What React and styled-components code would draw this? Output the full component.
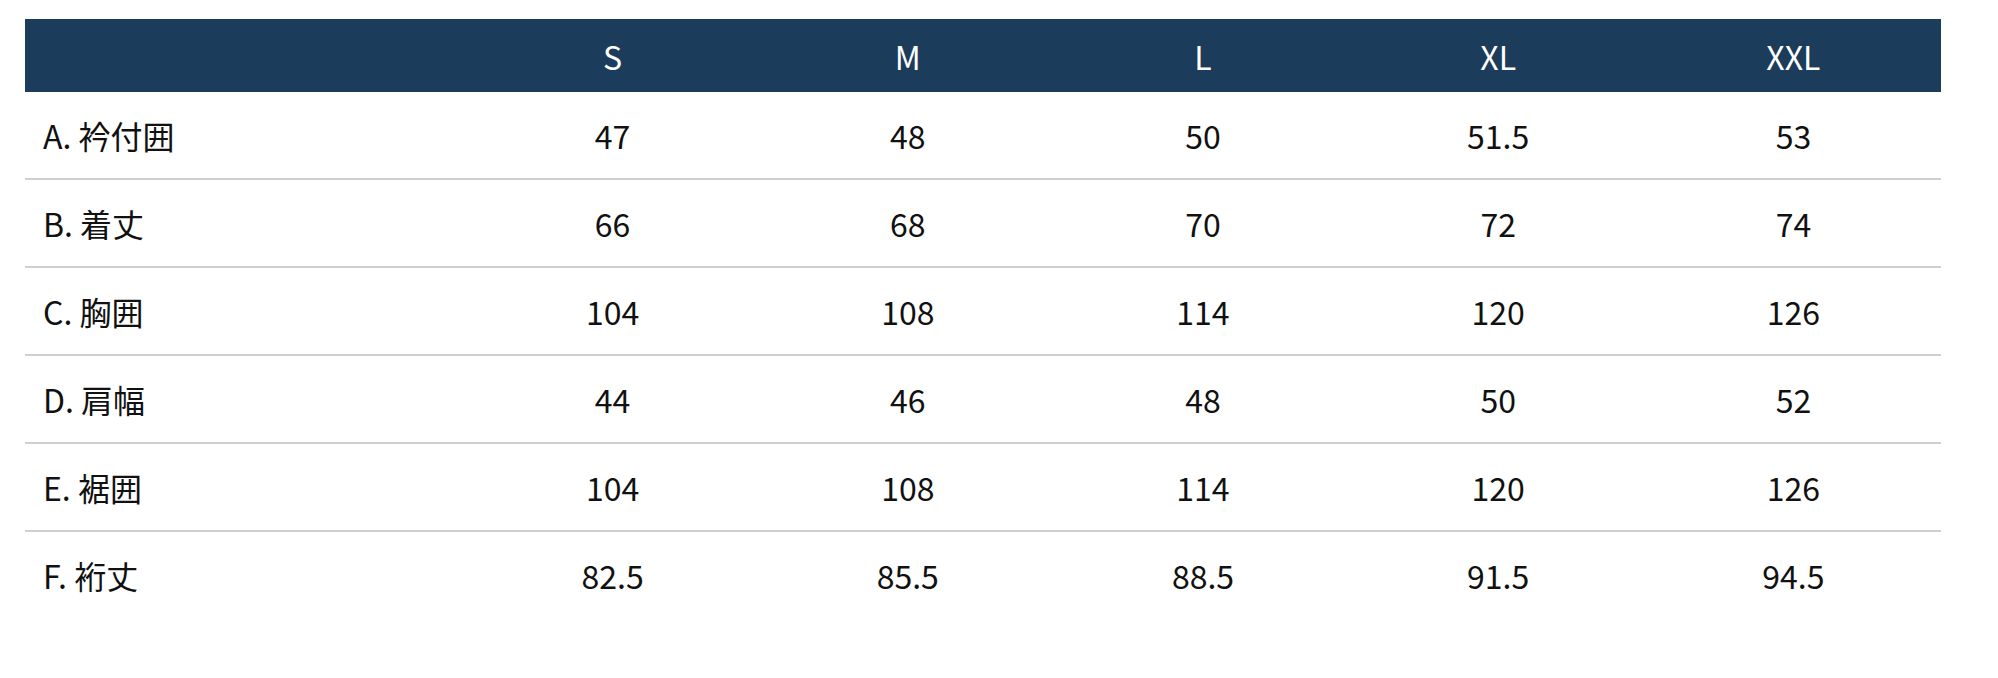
import React from 'react';
import styled, { createGlobalStyle } from 'styled-components';

const sizes = ['S', 'M', 'L', 'XL', 'XXL'];

const rows = [
  { label: 'A. 衿付囲', values: ['47', '48', '50', '51.5', '53'] },
  { label: 'B. 着丈', values: ['66', '68', '70', '72', '74'] },
  { label: 'C. 胸囲', values: ['104', '108', '114', '120', '126'] },
  { label: 'D. 肩幅', values: ['44', '46', '48', '50', '52'] },
  { label: 'E. 裾囲', values: ['104', '108', '114', '120', '126'] },
  { label: 'F. 裄丈', values: ['82.5', '85.5', '88.5', '91.5', '94.5'] },
];

const App = () => {
  return (
    <>
      <GlobalStyle />
      <Page>
        <Table>
          <HeadRow>
            <Cell />
            {sizes.map((size) => (
              <Cell key={size} center>
                {size}
              </Cell>
            ))}
          </HeadRow>
          {rows.map((row, idx) => (
            <BodyRow key={row.label} last={idx === rows.length - 1}>
              <Cell>{row.label}</Cell>
              {row.values.map((value, i) => (
                <Cell key={i} center>
                  {value}
                </Cell>
              ))}
            </BodyRow>
          ))}
        </Table>
      </Page>
    </>
  );
};

const GlobalStyle = createGlobalStyle`
  html, body {
    margin: 0;
    padding: 0;
    background: #fff;
  }
  body {
    font-family: "Noto Sans CJK JP", "Noto Sans", sans-serif;
    color: #111;
  }
`;

const Page = styled.div`
  padding: 19px 57px 0 25px;
`;

const Table = styled.div`
  width: 1916px;
  display: flex;
  flex-direction: column;
`;

const HeadRow = styled.div`
  display: grid;
  grid-template-columns: 440px repeat(5, 1fr);
  align-items: center;
  height: 73px;
  background: #1b3c5a;
  color: #fff;
`;

const BodyRow = styled.div`
  display: grid;
  grid-template-columns: 440px repeat(5, 1fr);
  align-items: center;
  height: 86px;
  border-bottom: 2px solid ${(p) => (p.last ? 'transparent' : '#cfcfcf')};
`;

const Cell = styled.div`
  font-size: 32px;
  line-height: 1;
  padding-left: ${(p) => (p.center ? '0' : '18px')};
  text-align: ${(p) => (p.center ? 'center' : 'left')};
`;

export default App;
